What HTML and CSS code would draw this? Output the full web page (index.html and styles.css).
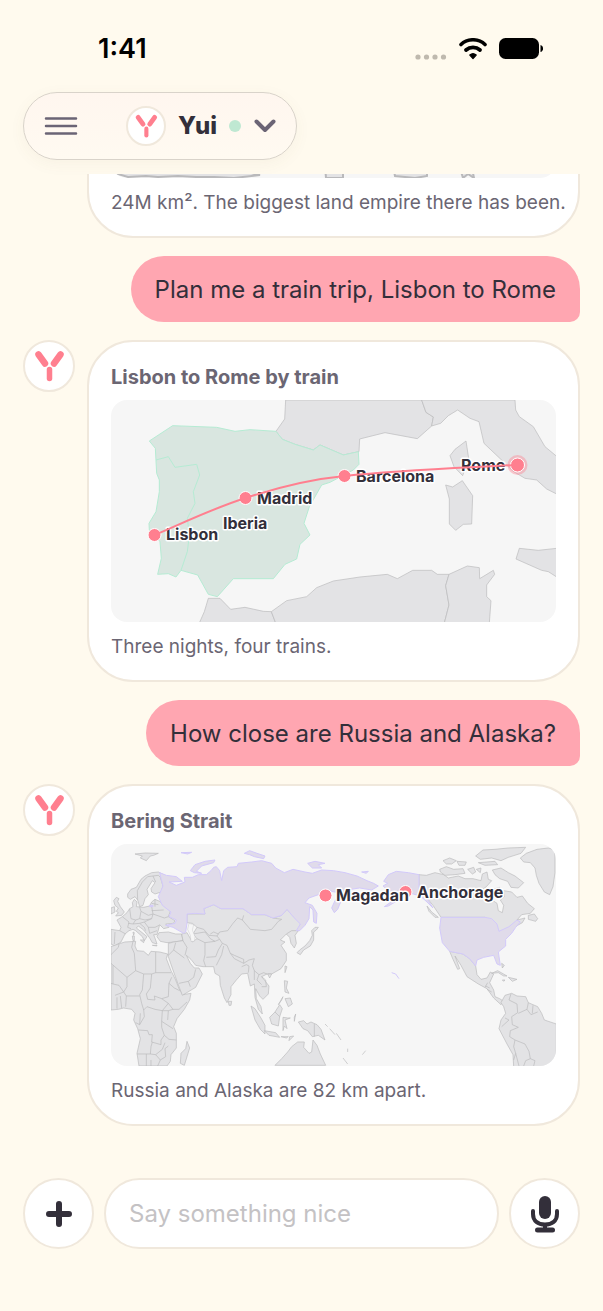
FILE: index.html
```
<!DOCTYPE html>
<html lang="en">
<head>
  <meta charset="UTF-8">
  <meta name="viewport" content="width=device-width, initial-scale=1.0">
  <title>Yui</title>
  <link rel="stylesheet" href="styles.css">
</head>
<body>
  <svg class="defs" width="0" height="0" aria-hidden="true">
    <symbol id="logo" viewBox="2 2 48 48">
      <path d="M15.500 14.500L22 23.500M37.500 14.500L31 23.500" stroke="#ff7f8f" stroke-width="6.500" stroke-linecap="round"/>
      <path d="M26.500 29.500V38.500" stroke="#ff7f8f" stroke-width="5.500" stroke-linecap="round"/>
    </symbol>
  </svg>

  <div class="status-bar">
    <span class="time">1:41</span>
    <div class="status-icons">
      <svg width="32" height="22" viewBox="0 0 32 22" fill="#bfb9ae"><circle cx="3" cy="19" r="2.600"/><circle cx="11.500" cy="19" r="2.600"/><circle cx="20" cy="19" r="2.600"/><circle cx="28.500" cy="19" r="2.600"/></svg>
      <svg width="28" height="22" viewBox="0 0 28 22" fill="none" stroke="#000" stroke-linecap="round"><path d="M2 6.500C8.500.200 19.500.200 26 6.500" stroke-width="3.600"/><path d="M7 12C11 8.500 17 8.500 21 12" stroke-width="3.800"/><path d="M14 20.500l-3.200-3.500c1.800-1.600 4.600-1.600 6.400 0z" fill="#000" stroke-width="1.200" stroke-linejoin="round"/></svg>
      <svg width="44" height="22" viewBox="0 0 44 22"><rect width="40" height="21" rx="6.500"/><path d="M41.500 7c3.500 1 3.500 6 0 7z"/></svg>
    </div>
  </div>

  <header class="top">
    <div class="pill">
      <button class="icon-btn" aria-label="Menu"><svg width="34" height="20" viewBox="0 0 34 20" stroke="#6b6475" stroke-width="2.500" stroke-linecap="round"><path d="M2 2.500h30M2 10h30M2 17.500h30"/></svg></button>
      <button class="persona">
        <span class="avatar small"><svg><use href="#logo"/></svg></span>
        <span class="name">Yui</span>
        <span class="online"></span>
        <svg width="22" height="14" viewBox="0 0 22 14" fill="none" stroke="#6b6475" stroke-width="4" stroke-linecap="round" stroke-linejoin="round"><path d="M2.500 2.500L11 11l8.500-8.500"/></svg>
      </button>
    </div>
  </header>

  <main class="chat">
    <div class="row">
      <article class="card">
        <svg class="map" viewBox="0 0 445 222">
          <g class="land">
            <path d="M7 218l10 3 18-1 12 1 20-1 18 1 18 0 20 1 26-3-40-9H20z"/>
            <path d="M214 210h18v12h-17zM282 210h34v10l-12 2-20-2zM349 212h12l2 10-6-4-5 4z"/>
          </g>
        </svg>
        <p>24M km². The biggest land empire there has been.</p>
      </article>
    </div>

    <div class="bubble">Plan me a train trip, Lisbon to Rome</div>

    <div class="row">
      <span class="avatar"><svg><use href="#logo"/></svg></span>
      <article class="card">
        <h2>Lisbon to Rome by train</h2>
        <svg class="map" viewBox="0 0 445 222">
          <g transform="translate(-11 -5) scale(.33333)">
            <g class="land">
              <path d="M557 15L554 72L528 109L547 133L585 148L640 165L660 150L695 165L730 180L777 170L779 132L855 113L952 131L995 93L1000 66L978 52L965 15z"/>
              <path d="M965 15L978 52L1000 66L995 93L1022 85L1045 62L1073 45L1110 70L1137 80L1152 145L1210 200L1238 228L1275 250L1310 255L1340 282L1370 297V184L1335 155L1300 95L1258 65L1247 45L1245 15z"/>
              <path d="M1098 138L1106 190L1088 242L1062 215L1050 182L1065 163z"/>
              <path d="M1037 270L1058 276L1087 257L1118 302L1115 387L1090 388L1067 406L1048 387V312z"/>
              <path d="M1258 460L1315 466L1370 460V546L1345 530L1325 526L1248 492z"/>
              <path d="M298 684L313 650L325 610H360L392 643L435 637L490 649L514 650L527 684z"/>
              <path d="M514 650L560 617L620 605L650 578L700 558L780 546L862 538L892 551L938 526H995L1012 538H1047L1037 572L1047 630L1033 684H527z"/>
              <path d="M1047 538L1102 513L1138 518L1139 551L1180 526L1184 538L1160 570V605L1173 617L1168 684H1033L1047 630L1037 572z"/>
            </g>
            <g class="mint">
              <path d="M148 138L218 92L350 97L405 109L450 104L528 109L547 133L585 148L640 165L660 150L695 165L730 180L775 170L777 208L760 225L690 262L665 270L628 335L612 385L630 420L600 448L590 492L555 508L520 551H400L352 605L325 598L293 540L243 526L228 546L205 536L173 538L184 490L180 440L148 405L147 385L168 350L178 290V255L170 235L166 160z"/>
              <path d="M168 195L205 185L225 217L290 208L299 240L280 290L285 325L262 370L268 420L262 470L243 526" fill="none"/>
            </g>
          </g>
          <circle cx="406.500" cy="65" r="10" fill="#ff7f8f" opacity=".4"/>
          <g class="pin"><circle cx="43.500" cy="135" r="6.500"/><circle cx="134.500" cy="98" r="6.500"/><circle cx="233.500" cy="76" r="6.500"/><circle cx="406.500" cy="65" r="7"/></g>
          <g class="label">
            <text x="55" y="140">Lisbon</text>
            <text x="146" y="104">Madrid</text>
            <text x="112" y="129">Iberia</text>
            <text x="245" y="82">Barcelona</text>
            <text x="350" y="71">Rome</text>
          </g>
          <path class="route" d="M46 134C74 122 103 108 134.500 98C165 88 202 79 233.500 76C290 70 350 68 404 65"/>
        </svg>
        <p>Three nights, four trains.</p>
      </article>
    </div>

    <div class="bubble">How close are Russia and Alaska?</div>

    <div class="row">
      <span class="avatar"><svg><use href="#logo"/></svg></span>
      <article class="card">
        <h2>Bering Strait</h2>
        <svg class="map" viewBox="0 0 445 222">
          <g transform="translate(-6 -4) scale(.33333)">
            <!-- europe and africa -->
            <g class="land">
              <path d="M90 42L120 39L160 40L146 46L136 48L124 62L106 54L112 48z"/>
              <path d="M68 162L78 148L94 142L108 118L120 108L140 98L160 96L176 104L166 112L174 138L168 156L150 162L140 156L138 146L150 128L142 122L126 148L130 164L120 176L114 196L104 200L98 180L90 170L76 178L68 172z"/>
              <path d="M98 180L97 152L112 126L128 110L144 108L152 126M144 108L160 106L166 112" class="line"/>
              <path d="M34 172L42 176L38 184L46 200L58 216L50 226L32 228L40 218L34 214L40 204L30 196L26 182zM18 204L28 200L30 216L18 222z"/>
              <path d="M18 268L44 272L48 262L36 240L52 230L66 218L74 206L84 200L82 188L88 178L96 186L94 200L116 202L134 198L140 186L150 178L164 184L176 196L196 214L190 230L210 242L206 250L182 252L192 262L176 266L164 254L160 270L156 284L146 284L152 300L156 312L142 308L134 294L116 270L100 258L94 264L114 280L126 290L118 302L112 290L92 272L84 268L72 272L60 282L48 306L30 318L18 312z"/>
              <path d="M52 230L72 246L68 262L78 266M74 206L78 236L92 240L104 236L108 214L104 202M108 214L130 226L144 222L140 200M140 212L176 210M144 222L178 234L190 230M92 240L84 252L70 250M104 236L120 240L140 236L144 222M84 252L104 250L118 246L140 236M118 246L130 262L150 262L162 256M130 262L134 280L156 272M104 250L118 262L122 272M44 272L62 282M30 276L28 312M150 178V200M140 190L160 194" class="line"/>
              <path d="M82 288H88V302H84zM84 276L88 278L86 286zM106 300L118 300L116 308zM142 316H156V318z"/>
              <path d="M156 290L162 278L190 276L212 282L230 282L234 302L206 306L186 308L166 304z"/>
              <path d="M18 320L40 312L60 306L92 304L90 318L96 332L116 334L130 346L138 334L164 336L188 342L184 356L198 392L212 420L222 446L234 464L258 460L254 480L238 508L216 536L206 560L214 580L214 624L198 644L196 664L186 678H102L96 640L106 596L98 566L86 540L90 520L80 508L56 504L40 508L18 510z"/>
              <path d="M42 312L40 322L18 344M18 370L66 412L92 392L88 340L80 322L84 304M92 392L116 402L112 450L104 464L110 490L116 510M152 336V398H198M152 398L140 402L136 444L124 462L128 478L150 480L148 468L170 476L190 470L192 430L200 412M116 402L140 402M66 412L66 440L56 456L64 468H104M24 376V432L42 436L56 456M18 430L24 432M30 466L56 456M36 472V506M46 468L50 504M64 468L62 500M116 510L126 500L150 508L172 512L190 490L170 476M192 430L208 444L224 452M190 490L204 508L222 508L246 486M204 508L190 512L172 512L170 544L204 566M190 512L188 540M106 520L104 554L92 548M116 510L118 530L104 554M100 570L128 572L132 584H142L140 606L168 614V600L178 586L170 562V544M178 586L192 598L214 600M142 606L138 620L136 642H96M136 642L152 644L172 628L180 608M152 644L166 660L182 650L180 626L190 618M124 642V678M166 660L158 678M138 660V678" class="line"/>
              <path d="M246 604L254 624L246 650L238 676L226 670L228 640L242 626z"/>
              <!-- asia -->
              <path d="M190 310L206 306L234 302L230 282L246 278L262 306L276 296L264 282L276 262L262 250L246 248V222H300L296 206L326 194L348 206H414L440 224L480 224L504 234L530 226L546 208L566 230L590 246L580 272L570 286L574 310L568 324L558 310L554 292L544 282L526 300L540 306L528 316L544 340L544 362L528 386L500 402L486 402L470 410L492 438L490 462L474 478L464 468L452 446L454 476L468 500L472 522L460 508L450 472L448 432L436 438L428 400L410 402L394 420L378 440L378 464L366 488L358 474L346 436L344 408L330 400L326 380L294 380L272 376L258 358L244 346L256 370L268 384L282 384L292 402L272 442L232 466L222 440L206 396L190 350z"/>
              <path d="M212 308L206 330L190 346M206 330L238 354M234 302L246 322L240 346M222 430L250 424L266 412L272 388M250 424L256 440M276 296L300 308V344L296 362L302 380M300 308L330 304L344 298L352 310L340 330L332 350L304 352M264 282L300 276L316 296L330 304M276 262L296 268L312 286L336 288L344 276L368 272M316 282L326 276L340 282M336 288L344 298M368 272L384 250L398 234L412 240L416 226M412 240L436 268L480 272L500 268L520 244L530 238L504 234M352 310L366 316L376 340L388 356L416 370L432 360L448 356L442 376L448 392L462 404L476 398L486 402M356 318L350 344L334 376M376 340L388 346L416 358L416 370M410 380L424 374L432 378L430 398M448 392L448 420M462 404L456 420L470 434M470 410L482 420L484 440L470 440M544 282L560 272L580 272" class="line"/>
              <path d="M370 484L380 484L378 496L372 496zM438 498L450 506L468 534L480 556V582L466 568L450 540z"/>
              <path d="M630 262L640 262L634 270L626 276L626 300L616 318L596 330L586 344L576 338L584 330L600 318L614 302L622 286L620 272z"/>
              <path d="M540 378L546 380L540 398zM488 402H500L494 414zM538 422L548 424L544 444L552 460L540 456zM540 476L556 474L562 492L550 500zM530 480L520 494L534 470z"/>
              <path d="M478 572L512 578L524 592L492 586zM528 590H550L544 594zM554 590L566 588L552 602zM494 532L510 516L524 494L532 506L524 530L520 558L500 552z"/>
              <path d="M534 532L548 534H556L540 540L546 566L538 558L534 572zM568 532L572 522L568 544zM580 546L596 542L606 552L618 546L636 554L648 568L660 600L640 586L622 590L608 572L594 566z"/>
              <path d="M628 552V590M510 516L524 530" class="line"/>
              <path d="M510 676L530 656L548 636L560 620L578 606L598 606L596 622L612 640L620 636L624 600L636 616L646 642L662 676z"/>
              <path d="M660 552L668 560M674 566L690 584M694 580L708 600M728 626V636M772 644L782 632M714 654L728 672" class="line"/>
              <!-- americas -->
              <path d="M942 104L964 106L990 98L1016 104L1030 114L1060 108L1080 116L1104 116L1128 122L1132 102L1146 96L1150 118L1160 122L1144 140L1128 152L1134 172L1158 178L1176 190L1180 212L1192 218L1196 196L1186 180L1198 170L1196 152L1220 156L1236 172L1252 168L1268 190L1288 206L1276 220L1250 224L1236 240L1260 234L1252 248L1234 258L1212 262L1182 276L1166 244L1140 232H1008L984 196L964 172L942 162z"/>
              <path d="M1270 226L1288 222L1298 236L1292 244L1270 238zM966 198L980 216L1000 232L990 232L972 214z"/>
              <path d="M1004 88L1024 80L1046 88L1074 86L1080 100L1050 104L1020 106L1006 96zM1014 62L1034 54L1054 62L1040 72L1024 72zM1056 64L1084 66L1080 76L1062 76zM1088 88L1106 82L1112 96L1102 102zM1114 88L1128 84L1126 98zM1120 68L1170 64L1178 74L1140 76zM1112 48L1134 30L1170 28L1210 24L1262 22L1248 40L1210 52L1188 62L1160 54L1126 58zM1162 90L1188 84L1210 98L1230 108L1256 128L1240 144L1218 142L1208 124L1184 116L1170 104zM1166 148L1184 142L1190 156L1176 158z"/>
              <path d="M1246 54L1264 40L1296 28L1330 24L1350 30V98L1344 140L1334 164L1318 156L1302 130L1294 106L1290 84L1276 68L1256 66z"/>
              <path d="M1034 334L1074 342L1094 356L1112 378L1116 404L1128 418L1146 414L1156 396L1166 402L1154 428L1166 450L1170 470L1184 476L1196 484L1188 494L1166 474L1146 446L1120 432L1086 410L1068 376L1050 348L1064 386L1058 388L1044 358z"/>
              <path d="M1142 438L1154 444M1148 428L1140 442M1160 456L1146 448" class="line"/>
              <path d="M1160 400L1178 392L1206 408L1196 408L1180 398zM1210 412L1236 418L1222 424zM1192 420H1200L1196 424zM1190 370L1198 376L1192 384z"/>
              <path d="M1188 488L1200 466L1220 460L1236 468L1262 470L1270 488L1298 500L1310 520L1318 540L1354 552V680H1226L1224 644L1206 612L1182 566L1188 540L1202 520L1196 500z"/>
              <path d="M1218 462L1212 480L1236 492L1238 518L1220 530L1222 554L1240 562L1216 572L1214 590L1230 600L1226 620L1232 640L1226 660M1270 488L1266 508L1240 520M1266 508L1278 524L1298 516M1284 496L1282 520M1200 534L1212 540L1190 560M1230 600L1260 612L1272 634L1276 656L1262 662L1256 678M1232 640L1242 678M1276 656L1290 662L1286 678" class="line"/>
            </g>
            <path d="M252 250L266 254L262 270L270 290L268 304L258 304L256 286L248 268z" class="sea"/>
            <g class="lilac">
              <path d="M164 98L184 106L214 110L232 124L192 126L214 136L240 126L238 112L262 112L280 104L304 104L318 92L326 82L334 80L344 92L350 122L356 92L368 82L396 80L400 70L440 66L470 62L500 70L512 84L538 98L564 88L600 96L622 100L650 90L686 92L720 98L756 108L786 122L806 130L820 138L800 150L764 144L738 148L718 164L706 188L698 208L688 218L680 204L690 182L714 158L688 156L660 148L640 164L612 174L600 188L622 196L636 220L634 250L626 246L624 210L614 200L612 236L600 256L584 272H574L586 252L566 232L546 208L530 226L504 234L480 224H440L414 206H348L326 194L296 206L300 222L270 220L246 222V250L242 276L236 280L204 262L182 256L210 250L214 240L192 230L198 216L172 196L160 170L174 138z"/>
              <path d="M256 92L270 74L300 64L330 60L326 68L290 78L274 94L290 100L268 98zM228 38L260 37L248 42zM418 40L434 32L456 40L480 48L476 56L448 50L434 44zM608 70L630 64L660 70L640 74L650 84L622 84zM770 96L790 94L784 100zM134 196L144 196V200L134 200z"/>
              <path d="M836 124L850 104L874 94L910 98L942 104V162L964 172L984 204L966 186L946 168L918 160L896 168L874 184L850 198L838 200L858 186L848 172L836 160L846 148L834 138L848 130z"/>
              <path d="M1008 232H1140L1160 236L1176 252L1182 274L1212 260L1236 240L1246 246L1232 262L1220 280L1202 298V318L1180 336L1186 376L1176 372L1166 346L1136 352L1116 360L1112 378L1094 356L1074 342L1034 334L1012 308L1004 264z"/>
              <path d="M860 398L872 402L882 416" fill="none"/>
            </g>
          </g>
          <g class="pin"><circle cx="214.500" cy="51.500" r="6.500"/><circle cx="294.500" cy="48" r="6.500"/></g>
          <g class="label">
            <text x="225" y="57">Magadan</text>
            <text x="306" y="54">Anchorage</text>
          </g>
        </svg>
        <p>Russia and Alaska are 82 km apart.</p>
      </article>
    </div>
  </main>

  <form class="composer">
    <button type="button" class="round" aria-label="Add"><svg width="28" height="28" viewBox="0 0 28 28" stroke="#332f3a" stroke-width="6" stroke-linecap="round"><path d="M14 4v20M4 14h20"/></svg></button>
    <input type="text" aria-label="Message" placeholder="Say something nice">
    <button type="button" class="round" aria-label="Dictate"><svg width="30" height="38" viewBox="0 0 30 38" fill="none" stroke="#332f3a" stroke-linecap="round"><rect x="9" y="1" width="12" height="23" rx="6" fill="#332f3a" stroke="none"/><path d="M3 16v3c0 7 5 10.500 12 10.500S27 26 27 19v-3" stroke-width="4"/><path d="M15 30v4" stroke-width="4"/><path d="M7.500 35h15" stroke-width="5"/></svg></button>
  </form>
</body>
</html>
```
FILE: styles.css
```
:root{--bg:#fffaee;--ink:#332f3a;--muted:#6b6673;--line:#f0e8dc;--pink:#ffa6b1;--coral:#ff7f8f}
*{box-sizing:border-box}
body{margin:0;height:100vh;display:flex;flex-direction:column;background:var(--bg);color:var(--ink);font-family:Inter,"Noto Sans",sans-serif}
button{border:none;background:none;padding:0;font:inherit;color:inherit;cursor:pointer}
svg{display:block}
.defs{position:absolute}

.status-bar{display:flex;justify-content:space-between;align-items:center;padding:33px 60px 0 98px;color:#000}
.time{font-size:27px;line-height:32px;font-weight:600}
.status-icons{display:flex;gap:12px}

.top{padding:27px 23px 14px}
.pill{display:inline-flex;align-items:center;gap:48px;height:68px;padding:0 20px;border:1px solid #d9d3ca;border-radius:34px;background:linear-gradient(#fff6ef,#fffaf1);box-shadow:0 4px 16px rgba(120,90,60,.05);vertical-align:top}
.persona{display:flex;align-items:center}
.name{margin-left:12px;font-size:24px;line-height:32px;font-weight:800}
.online{width:12px;height:12px;margin:0 13px 0 12px;border-radius:50%;background:#bfe8d2}

.avatar{flex:none;width:52px;height:52px;border:2px solid var(--line);border-radius:50%;background:#fff}
.avatar svg{width:100%;height:100%}
.avatar.small{width:40px;height:40px}

.chat{flex:1;min-height:0;overflow:hidden;display:flex;flex-direction:column;justify-content:flex-end;gap:18px;padding:0 23px}
.row{display:flex;flex:none;align-items:flex-start;gap:12px}
.card{flex:1;min-width:0;padding:22px 22px 20px;border:2px solid var(--line);border-radius:46px;background:#fff;color:var(--muted)}
.row .card:first-child{margin-left:64px}
.card h2{margin:0 0 10px;font-size:20px;line-height:26px;font-weight:700}
.card p{margin:12px 0 0;font-size:19px;line-height:26px;white-space:nowrap}
.bubble{flex:none;align-self:flex-end;padding:17px 24px 15px;border-radius:33px 33px 10px 33px;background:var(--pink);font-size:24px;line-height:34px}

.map{width:100%;border-radius:16px;background:#f6f6f6}
.land{fill:#e3e3e5;stroke:#b9b9bb;stroke-width:2}
.line{fill:none}
.sea{fill:#f6f6f6;stroke:#b9b9bb;stroke-width:1}
.mint{fill:#d9e6e0;stroke:#b5ebd3;stroke-width:3}
.lilac{fill:#e0dbea;stroke:#d2c9fa;stroke-width:3}
.pin{fill:var(--coral);stroke:#fff;stroke-width:1}
.label{fill:var(--ink);stroke:#fff;stroke-width:3px;stroke-linejoin:round;paint-order:stroke;font-size:16px;font-weight:700}
.route{fill:none;stroke:var(--coral);stroke-width:2}

.composer{display:flex;gap:10px;padding:52px 23px 62px}
.round{flex:none;display:grid;place-items:center;width:71px;height:71px;border:2px solid var(--line);border-radius:50%;background:#fff}
.composer input{flex:1;min-width:0;height:71px;padding:0 23px;border:2px solid var(--line);border-radius:36px;background:#fff;font:inherit;font-size:24px;color:var(--ink);outline:none}
.composer input::placeholder{color:#c4c2c4;opacity:1}
```
